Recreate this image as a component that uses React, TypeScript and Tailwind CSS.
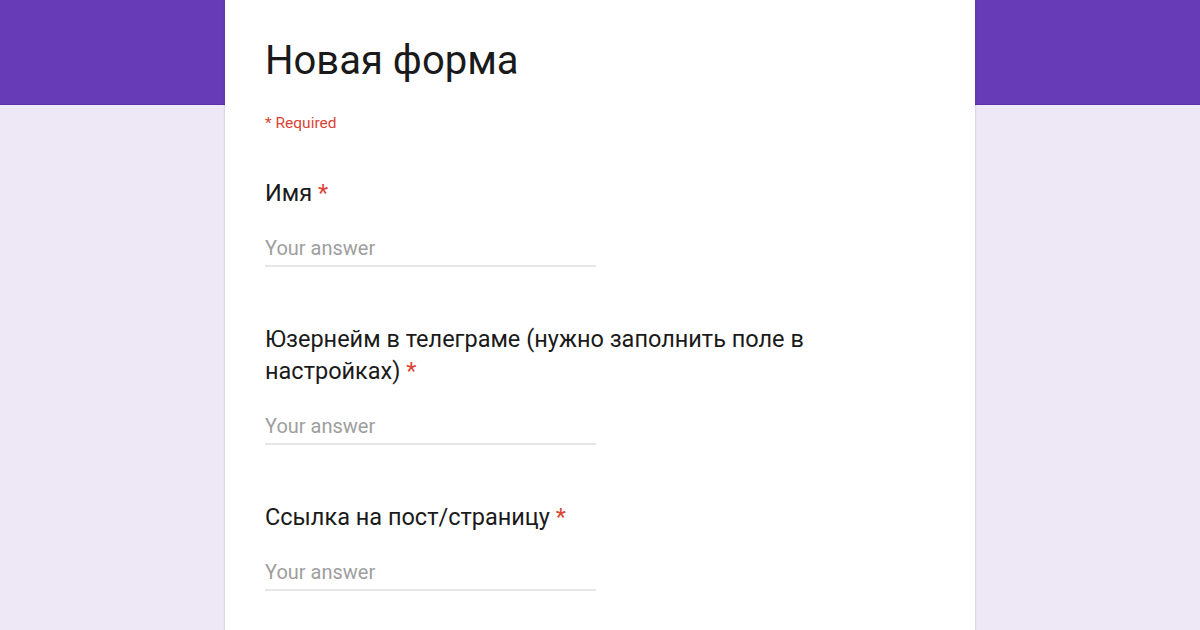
export default function App() {
  const questions = [
    { label: 'Имя' },
    { label: 'Юзернейм в телеграме (нужно заполнить поле в настройках)' },
    { label: 'Ссылка на пост/страницу' },
  ];

  return (
    <div className="relative w-[1200px] h-[630px] overflow-hidden bg-[#ede7f6] font-['Roboto',sans-serif]">
      <div className="absolute inset-x-0 top-0 h-[105px] bg-[#673ab7] border-b border-[#5b31a6]" />
      <div className="relative mx-auto w-[750px] h-[700px] bg-white shadow-[0_0_2px_rgba(0,0,0,0.2)] px-10 pt-[37px]">
        <h1 className="text-[40px] leading-[48px] text-[#1a1a1a] font-normal">Новая форма</h1>
        <div className="mt-[28px] text-[15.5px] leading-[20px] text-[#db4437]">* Required</div>
        <div className="mt-[44px] flex flex-col">
          {questions.map((q, i) => (
            <div key={i} className="pb-[56px]">
              <div className="w-[580px] text-[23.5px] leading-[32px] text-[#1a1a1a]">
                {q.label} <span className="text-[#db4437]">*</span>
              </div>
              <div className="mt-[27px] w-[331px] border-b-2 border-[#e6e6e6] pb-[5px] text-[20px] leading-[24px] text-[#9e9e9e]">
                Your answer
              </div>
            </div>
          ))}
        </div>
      </div>
    </div>
  );
}
